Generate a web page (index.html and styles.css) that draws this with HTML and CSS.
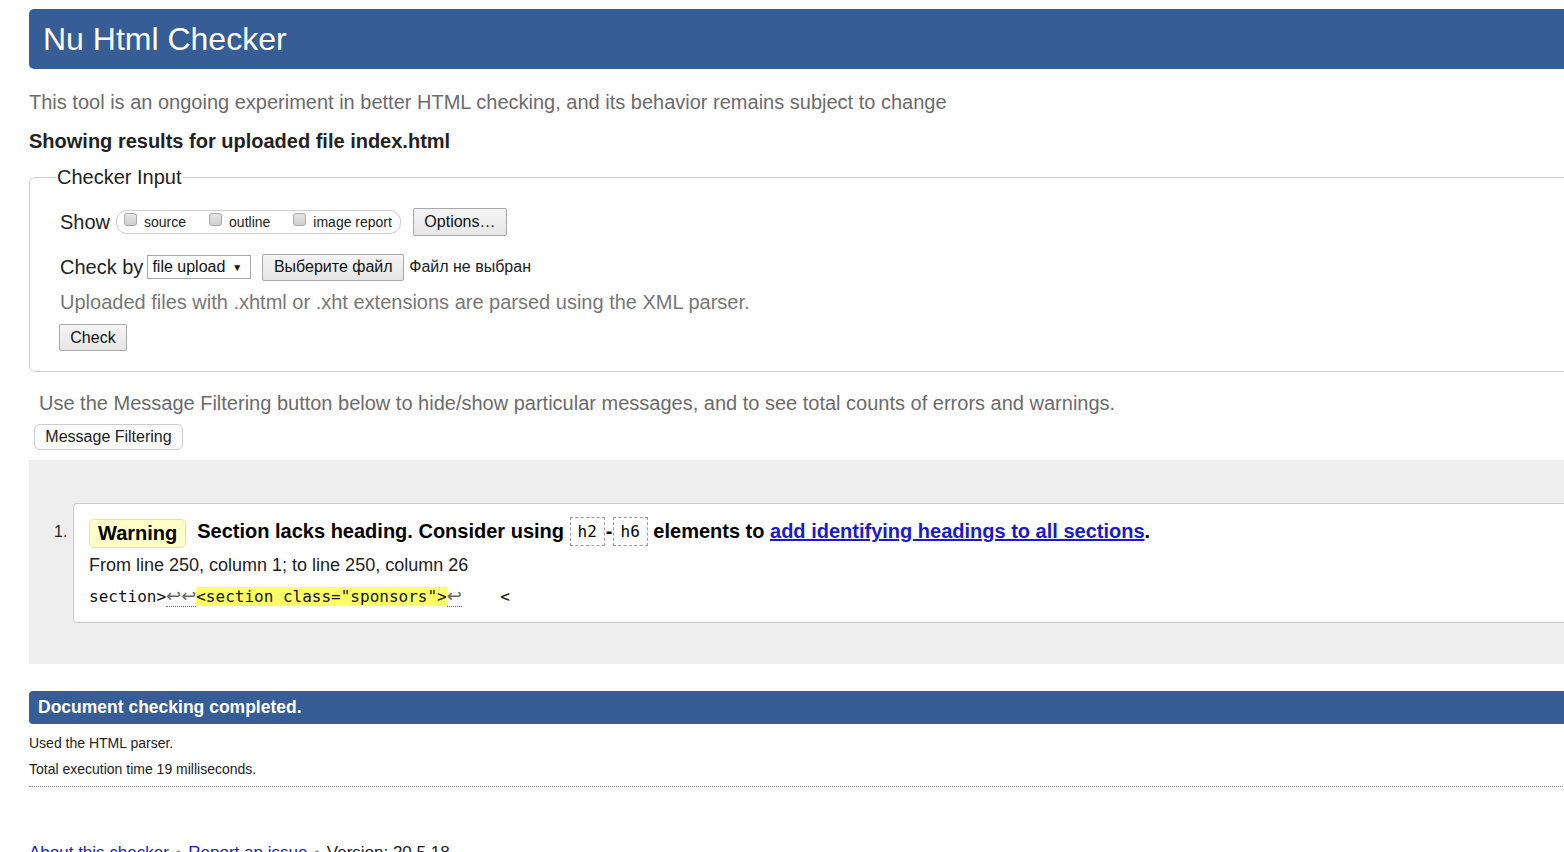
FILE: index.html
```html
<!DOCTYPE html>
<html lang="en">
<head>
<meta charset="utf-8">
<title>Nu Html Checker</title>
<link rel="stylesheet" href="styles.css">
</head>
<body>
<div class="page">
  <h1 class="topbar">Nu Html Checker</h1>
  <p class="intro">This tool is an ongoing experiment in better HTML checking, and its behavior remains subject to change</p>
  <p class="showing">Showing results for uploaded file index.html</p>

  <fieldset class="checker">
    <legend>Checker Input</legend>
    <div class="row row-show">
      <span class="lbl">Show</span>
      <span class="group">
        <label class="opt"><input type="checkbox"> source</label>
        <label class="opt"><input type="checkbox"> outline</label>
        <label class="opt"><input type="checkbox"> image report</label>
      </span>
      <button class="btn btn-options" type="button">Options…</button>
    </div>
    <div class="row row-by">
      <span class="lbl">Check by</span>
      <span class="select">file upload <span class="caret">▼</span></span>
      <button class="btn btn-file" type="button">Выберите файл</button>
      <span class="nofile">Файл не выбран</span>
    </div>
    <p class="note">Uploaded files with .xhtml or .xht extensions are parsed using the XML parser.</p>
    <div class="row row-check">
      <button class="btn btn-check" type="button">Check</button>
    </div>
  </fieldset>

  <p class="filter-note">Use the Message Filtering button below to hide/show particular messages, and to see total counts of errors and warnings.</p>
  <button class="btn-filter" type="button">Message Filtering</button>

  <div class="results">
    <div class="msg-row">
      <span class="num">1.</span>
      <div class="msg">
        <p class="msg-head"><span class="badge">Warning</span><span class="msg-text">Section lacks heading. Consider using <code class="tag">h2</code><span class="dash">-</span><code class="tag">h6</code> elements to <a href="#">add identifying headings to all sections</a>.</span></p>
        <p class="loc">From line 250, column 1; to line 250, column 26</p>
        <p class="extract"><code>section&gt;<span class="lf">↩↩</span><mark>&lt;section class="sponsors"&gt;</mark><span class="lf">↩</span>    &lt;</code></p>
      </div>
    </div>
  </div>

  <div class="done">Document checking completed.</div>
  <p class="small first">Used the HTML parser.</p>
  <p class="small">Total execution time 19 milliseconds.</p>
  <hr class="dotted">

  <p class="footer"><a href="#">About this checker</a> <span class="sep">•</span> <a href="#">Report an issue</a> <span class="sep">•</span> Version: 20.5.18</p>
</div>
</body>
</html>
```

FILE: styles.css
```css
html, body {
  margin: 0;
  padding: 0;
  overflow: hidden;
  background: #ffffff;
}

body {
  font-family: "Liberation Sans", Arial, sans-serif;
  color: #222;
}

.page {
  width: 1600px;
  padding: 9px 0 0 29px;
}

.topbar {
  margin: 0;
  height: 60px;
  line-height: 60px;
  padding-left: 14px;
  background: #365d96;
  color: #fff;
  font-size: 32px;
  font-weight: normal;
  border-radius: 5px 0 0 5px;
}

.intro {
  margin: 20px 0 0;
  font-size: 20px;
  line-height: 26px;
  color: #6b6b6b;
}

.showing {
  margin: 13px 0 0;
  font-size: 20px;
  line-height: 26px;
  font-weight: bold;
  color: #222;
}

.checker {
  margin: 12px 0 0;
  padding: 0 0 20px 30px;
  border: 1px solid #cfcfcf;
  border-radius: 6px;
  min-width: 0;
}

.checker legend {
  font-size: 20px;
  margin-left: -4px;
  padding: 0 1px;
  color: #222;
}

.row {
  display: flex;
  align-items: center;
}

.lbl {
  font-size: 20px;
  color: #222;
}

.row-show {
  margin-top: 18px;
  height: 30px;
}

.group {
  display: inline-flex;
  align-items: center;
  margin-left: 6px;
  height: 22px;
  padding: 0 8px 0 7px;
  border: 1px solid #cccccc;
  border-radius: 11px;
  font-size: 14px;
  color: #222;
}

.opt {
  display: inline-flex;
  align-items: center;
  margin-right: 23px;
}

.opt:last-child {
  margin-right: 0;
}

.opt input {
  appearance: none;
  -webkit-appearance: none;
  width: 13px;
  height: 13px;
  margin: -6px 7px 0 0;
  border: 1px solid #a8a8a8;
  border-radius: 3px;
  background: linear-gradient(#e6e6e6, #cfcfcf);
}

.btn {
  font-family: "Liberation Sans", Arial, sans-serif;
  font-size: 16px;
  color: #111;
  background: linear-gradient(#f4f4f4, #e6e6e6);
  border: 1px solid #a9a9a9;
  border-radius: 2px;
  padding: 0 9px;
  height: 28px;
}

.btn-options {
  margin-left: 12px;
  width: 94px;
}

.row-by {
  margin-top: 16px;
  height: 28px;
}

.select {
  display: inline-flex;
  align-items: center;
  margin-left: 4px;
  height: 22px;
  padding: 0 8px 0 4px;
  border: 1px solid #a9a9a9;
  background: #fff;
  font-size: 16px;
  color: #111;
}

.caret {
  font-size: 10px;
  margin-left: 7px;
}

.btn-file {
  margin-left: 11px;
  height: 27px;
  width: 142px;
}

.nofile {
  margin-left: 5px;
  font-size: 16px;
  color: #222;
}

.note {
  margin: 8px 0 0;
  font-size: 20px;
  line-height: 26px;
  color: #777;
}

.row-check {
  margin-top: 9px;
}

.btn-check {
  height: 27px;
  width: 68px;
  margin-left: -1px;
  padding: 0;
}

.filter-note {
  margin: 18px 0 0 10px;
  font-size: 20px;
  line-height: 26px;
  color: #6b6b6b;
}

.btn-filter {
  display: block;
  margin: 8px 0 0 5px;
  height: 26px;
  width: 149px;
  padding: 0;
  font-family: "Liberation Sans", Arial, sans-serif;
  font-size: 16px;
  color: #222;
  background: #fcfcfc;
  border: 1px solid #cccccc;
  border-radius: 6px;
}

.results {
  margin-top: 10px;
  background: #eeeeee;
  padding: 43px 0 41px 25px;
}

.msg-row {
  display: flex;
  align-items: flex-start;
}

.num {
  width: 19px;
  font-size: 16px;
  line-height: 20px;
  margin-top: 19px;
  color: #222;
}

.msg {
  flex: 1;
  background: #fff;
  border: 1px solid #cccccc;
  border-right: 0;
  border-radius: 4px 0 0 4px;
  padding: 14px 0 14px 15px;
}

.msg p {
  margin: 0;
}

.msg-head {
  display: flex;
  align-items: center;
  height: 30px;
}

.badge {
  display: inline-block;
  height: 27px;
  line-height: 27px;
  padding: 0 8px;
  background: #ffffc8;
  border: 1px solid #e3dfae;
  border-radius: 5px;
  font-size: 20px;
  font-weight: bold;
  color: #000;
}

.msg-text {
  margin-left: 11px;
  font-size: 20px;
  font-weight: bold;
  color: #000;
  white-space: nowrap;
}

.tag {
  display: inline-block;
  font-family: "DejaVu Sans Mono", "Liberation Mono", monospace;
  font-weight: normal;
  font-size: 16px;
  line-height: 27px;
  padding: 0 7px;
  border: 1px dashed #9a9a9a;
  vertical-align: middle;
  margin-top: -4px;
}

.dash {
  margin: 0 0 0 1px;
}

.msg-text a {
  color: #1a1acc;
  text-decoration: underline;
}

.loc {
  margin-top: 4px !important;
  font-size: 18px;
  line-height: 26px;
  color: #222;
}

.extract {
  margin-top: 8px !important;
  line-height: 22px;
}

.extract code {
  font-family: "DejaVu Sans Mono", "Liberation Mono", monospace;
  font-size: 16px;
  color: #111;
  white-space: pre;
}

.extract mark {
  background: #ffff66;
  color: #111;
}

.lf {
  font-family: "DejaVu Sans", sans-serif;
  font-size: 18px;
  line-height: 18px;
  color: #666;
  border-bottom: 1px dotted #666;
}

.done {
  margin-top: 27px;
  height: 33px;
  line-height: 33px;
  padding-left: 9px;
  background: #365d96;
  color: #fff;
  font-size: 17.5px;
  font-weight: bold;
  border-radius: 4px 0 0 4px;
}

.small {
  margin: 0;
  font-size: 14px;
  line-height: 26px;
  color: #222;
}

.small.first {
  margin-top: 6px;
}

.dotted {
  margin: 4px 0 0;
  border: 0;
  border-top: 1px dotted #8a8a8a;
  height: 0;
}

.footer {
  margin: 56px 0 0;
  font-size: 17px;
  color: #222;
}

.footer a {
  color: #1a1acc;
  text-decoration: none;
}

.sep {
  margin: 0 2px;
  color: #888;
}
```
